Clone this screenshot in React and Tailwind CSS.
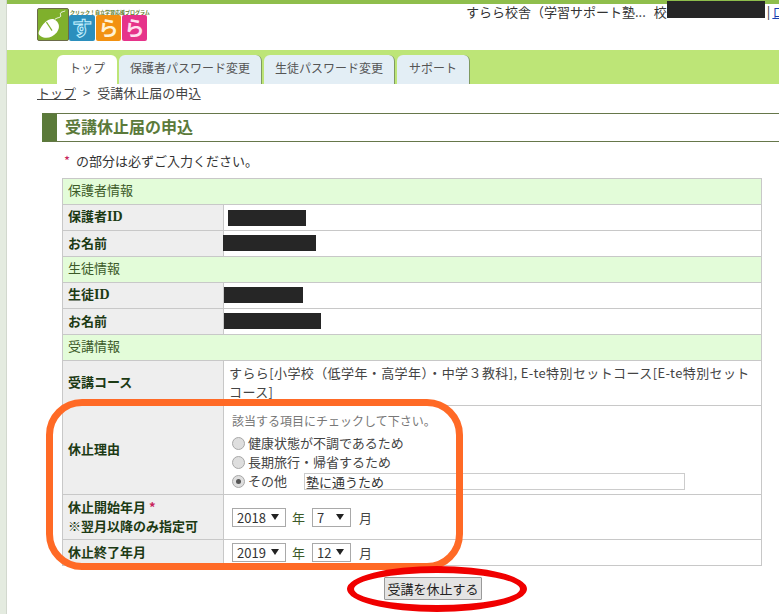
const font = 'font-["Noto_Sans_CJK_JP","Noto_Sans",sans-serif]';

// black marker strokes that hide personal data in the screenshot
function Redact({ className }) {
  return <div className={`absolute bg-[#262626] ${className}`} />;
}

function Logo() {
  return (
    <div className="flex items-end w-[110px] h-[33px] mt-[4px] ml-[30px] shrink-0">
      <div className="w-[32px] h-[33px] bg-[#7fb02c] rounded-[2px] border border-[#6b6b4a] shrink-0">
        <svg viewBox="0 0 32 33" width="30" height="31">
          <path d="M1 24 C5 14 13 9 17 11 C23 14 24 20 20 25 C15 31 8 32 3 29 C1 28 0 26 1 24 Z" fill="#fff" />
          <path d="M9 14 L15 23" fill="none" stroke="#7fb02c" strokeWidth="1.2" />
          <path d="M18 11 C22 8 25 10 24 6 C23 3 27 3 29 2" fill="none" stroke="#fff" strokeWidth="1" />
        </svg>
      </div>
      <div className="flex-1 flex flex-col min-w-0">
        <div className="text-[5px] leading-[7px] h-[7px] pl-[1px] text-[#5c7a1e] font-bold whitespace-nowrap">クリック！自立学習応援プログラム</div>
        <div className="flex h-[26px] gap-[1px]">
          <div className="w-[26px] bg-[#2b8fbd] rounded-[2px] flex items-center justify-center text-[20px] leading-none font-bold text-[#2b8fbd] [-webkit-text-stroke:1px_#c4f1ff]">す</div>
          <div className="w-[25px] bg-[#f29111] rounded-[2px] flex items-center justify-center text-[20px] leading-none font-bold text-[#fff3d6]">ら</div>
          <div className="w-[25px] bg-[#e6338a] rounded-[2px] flex items-center justify-center text-[20px] leading-none font-bold text-[#ffe0ef]">ら</div>
        </div>
      </div>
    </div>
  );
}

function Tab({ active, className, children }) {
  return (
    <div
      className={`h-[29px] pb-[3px] rounded-t-[6px] flex items-center justify-center text-[12px] text-[#555] ${
        active ? 'bg-white' : 'bg-[#e3eef5] border-r border-[#7f9a60]'
      } ${className}`}
    >
      {children}
    </div>
  );
}

function Section({ children }) {
  return (
    <tr className="h-[26px]">
      <td colSpan={2} className="bg-[#e3fcd9] border border-[#c8c8c8] px-[5px] pt-0 pb-[3px] text-[13px] text-[#3c5a28]">
        {children}
      </td>
    </tr>
  );
}

function Row({ label, h, children }) {
  return (
    <tr className={h}>
      <th className="bg-[#eeeeee] border border-[#c8c8c8] px-[5px] pt-0 pb-[3px] text-left text-[13px] font-bold text-[#1c3a14] leading-[19px]">
        {label}
      </th>
      <td className="bg-white border border-[#c8c8c8] pl-[8px] pr-[5px] py-0 text-[13px] text-[#444] leading-[19px]">{children}</td>
    </tr>
  );
}

function Radio({ checked }) {
  return (
    <span className="w-[13px] h-[13px] mt-[4px] mr-[3px] rounded-full border border-[#a8a8a8] bg-[#dedede] flex items-center justify-center shrink-0">
      {checked && <span className="w-[5px] h-[5px] rounded-full bg-[#555]" />}
    </span>
  );
}

function Select({ value, options, w }) {
  return (
    <span className={`relative inline-block h-[19px] ${w}`}>
      <select
        defaultValue={value}
        className="appearance-none w-full h-full bg-white border border-[#a9a9a9] pl-[4px] text-[13px] leading-[17px] text-[#333]"
      >
        {options.map((o) => (
          <option key={o}>{o}</option>
        ))}
      </select>
      <svg className="absolute right-[7px] top-[6px] pointer-events-none" width="8" height="6" viewBox="0 0 8 6">
        <path d="M0 0H8L4 6Z" fill="#222" />
      </svg>
    </span>
  );
}

function DateRow({ year, month }) {
  return (
    <div className="flex items-center">
      <Select value={year} options={[year]} w="w-[54px]" />
      <span className="ml-[6px] text-[#3c5a28]">年</span>
      <span className="ml-[7px] flex">
        <Select value={month} options={[month]} w="w-[39px]" />
      </span>
      <span className="ml-[8px]">月</span>
    </div>
  );
}

export default function App() {
  return (
    <div className={`relative w-[779px] h-[614px] overflow-hidden bg-white flex ${font}`}>
      {/* left edge of the page */}
      <div className="w-[7px] shrink-0 bg-[#e4ebe0] border-r border-[#d2d8ce]" />

      <div className="flex-1 min-w-0">
        <div className="h-[4px] bg-[#8fbe4c]" />

        {/* header */}
        <div className="h-[46px] flex justify-between">
          <Logo />
          <div className="w-[313px] shrink-0 overflow-hidden flex text-[13px] leading-[16px] text-[#333] whitespace-nowrap h-[16px]">
            <span>すらら校舎（学習サポート塾...</span>
            <span className="ml-[8px]">校</span>
            <span className="w-[98px] shrink-0" />
            <span className="mx-[2px]">|</span>
            <span className="text-[#1a3fb0] underline">ログアウト</span>
          </div>
        </div>

        {/* tabs */}
        <div className="h-[34px] bg-[#bde577] flex items-end pl-[50px] gap-[2px]">
          <Tab active className="w-[60px]">トップ</Tab>
          <Tab className="w-[143px]">保護者パスワード変更</Tab>
          <Tab className="w-[131px]">生徒パスワード変更</Tab>
          <Tab className="w-[73px]">サポート</Tab>
        </div>

        {/* breadcrumb */}
        <div className="h-[17px] pl-[30px] text-[13px] leading-[17px] text-[#444] whitespace-nowrap flex items-center">
          <span className="underline">トップ</span>
          <span className="mx-[7px]">&gt;</span>
          <span>受講休止届の申込</span>
        </div>

        {/* page title */}
        <div className="ml-[35px] mt-[12px] h-[29px] pb-[3px] border-y border-[#66774a] border-l-[15px] border-l-[#5b7a3a] pl-[8px] flex items-center text-[16px] font-bold text-[#5b7a3a]">
          受講休止届の申込
        </div>

        <div className="ml-[57px] mt-[10px] h-[17px] text-[13px] leading-[17px] text-[#333]">
          <span className="text-[#c8235a] mr-[3px]">*</span> の部分は必ずご入力ください。
        </div>

        {/* form table */}
        <table className="ml-[55px] mt-[9px] w-[700px] table-fixed border-collapse">
          <colgroup>
            <col className="w-[161px]" />
            <col />
          </colgroup>
          <tbody>
            <Section>保護者情報</Section>
            <Row label={<>保護者<span className='font-["Liberation_Serif"] text-[14px]'>ID</span></>} h="h-[26px]" />
            <Row label="お名前" h="h-[26px]" />
            <Section>生徒情報</Section>
            <Row label={<>生徒<span className='font-["Liberation_Serif"] text-[14px]'>ID</span></>} h="h-[26px]" />
            <Row label="お名前" h="h-[26px]" />
            <Section>受講情報</Section>
            <Row label="受講コース" h="h-[45px]">
              <div className="h-[44px] pt-[2px] ml-[-3px] mr-[-5px] tracking-[0.4px] whitespace-nowrap">
                すらら[小学校（低学年・高学年）・中学３教科], E-te特別セットコース[E-te特別セット
                <br />
                コース]
              </div>
            </Row>
            <Row label="休止理由" h="h-[89px]">
              <div className="text-[12px] text-[#777] leading-[19px] mb-[3px]">該当する項目にチェックして下さい。</div>
              <div className="flex leading-[19px]"><Radio />健康状態が不調であるため</div>
              <div className="flex leading-[19px]"><Radio />長期旅行・帰省するため</div>
              <div className="flex leading-[19px] whitespace-nowrap">
                <Radio checked />その他
                <input
                  defaultValue="塾に通うため"
                  className="ml-[17px] w-[381px] h-[17px] mt-[2px] border border-[#cccccc] px-[1px] text-[13px] leading-[15px] text-[#333]"
                />
              </div>
            </Row>
            <Row
              label={
                <>
                  休止開始年月 <span className="text-[#c8235a]">*</span>
                  <br />
                  ※翌月以降のみ指定可
                </>
              }
              h="h-[45px]"
            >
              <DateRow year="2018" month="7" />
            </Row>
            <Row label="休止終了年月" h="h-[26px]">
              <DateRow year="2019" month="12" />
            </Row>
          </tbody>
        </table>

        <div className="mt-[11px] pl-[377px]">
          <button className="block w-[98px] h-[23px] bg-[#e4e4e4] border border-[#9a9a9a] rounded-[1px] text-[13px] leading-none text-[#222]">
            受講を休止する
          </button>
        </div>
      </div>

      {/* marker strokes and annotations on top of the screenshot */}
      <Redact className="left-[667px] top-[1px] w-[98px] h-[17px]" />
      <Redact className="left-[228px] top-[210px] w-[78px] h-[16px]" />
      <Redact className="left-[223px] top-[235px] w-[93px] h-[16px]" />
      <Redact className="left-[224px] top-[287px] w-[79px] h-[16px]" />
      <Redact className="left-[224px] top-[313px] w-[97px] h-[16px]" />
      <div className="absolute left-[46px] top-[399px] w-[417px] h-[171px] rounded-[36px] border-[7px] border-[#ff6a26] pointer-events-none" />
      <div className="absolute left-[347px] top-[566px] w-[180px] h-[46px] rounded-[50%] border-[7px] border-[#f00000] pointer-events-none" />
    </div>
  );
}
